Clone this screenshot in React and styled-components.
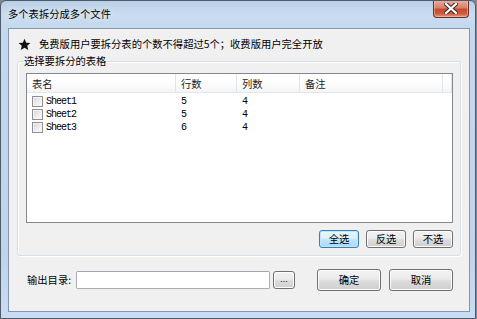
import React from "react";
import styled, { createGlobalStyle } from "styled-components";

const columns = [
  { title: "表名", width: 149 },
  { title: "行数", width: 61 },
  { title: "列数", width: 63 },
  { title: "备注", width: 143 },
];

const sheets = [
  { name: "Sheet1", rows: 5, cols: 4 },
  { name: "Sheet2", rows: 5, cols: 4 },
  { name: "Sheet3", rows: 6, cols: 4 },
];

const GlobalStyle = createGlobalStyle`
  html, body {
    margin: 0;
    padding: 0;
    background: #7d8a97;
  }
  body {
    font-family: "Noto Sans CJK SC", "Liberation Sans", sans-serif;
    font-size: 10.3px;
    color: #000;
  }
`;

export default function App() {
  return (
    <>
      <GlobalStyle />
      <Window>
        <TitleBar>
          <Title>多个表拆分成多个文件</Title>
          <CloseButton aria-label="关闭">
            <svg width="14" height="11" viewBox="0 0 14 11">
              <path
                d="M2 1 L12 10 M12 1 L2 10"
                stroke="#3a2a28"
                strokeWidth="4.2"
                strokeLinecap="square"
              />
              <path
                d="M2 1 L12 10 M12 1 L2 10"
                stroke="#ffffff"
                strokeWidth="2.2"
                strokeLinecap="square"
              />
            </svg>
          </CloseButton>
        </TitleBar>

        <Client>
          <Notice>
            <svg width="13" height="13" viewBox="0 0 24 24">
              <path
                d="M12 1.2 L15.1 8.6 L23 9.2 L17 14.4 L18.9 22.3 L12 18 L5.1 22.3 L7 14.4 L1 9.2 L8.9 8.6 Z"
                fill="#111"
              />
            </svg>
            <span>免费版用户要拆分表的个数不得超过5个；收费版用户完全开放</span>
          </Notice>

          <Group>
            <Legend>选择要拆分的表格</Legend>
            <ListView>
              <Header>
                {columns.map((c) => (
                  <HeaderCell key={c.title} $width={c.width}>
                    {c.title}
                  </HeaderCell>
                ))}
                <HeaderCell $width={10} $filler />
              </Header>
              <Rows>
                {sheets.map((s) => (
                  <Row key={s.name}>
                    <Cell $width={columns[0].width}>
                      <CheckBox />
                      <Mono>{s.name}</Mono>
                    </Cell>
                    <Cell $width={columns[1].width}>
                      <Mono>{s.rows}</Mono>
                    </Cell>
                    <Cell $width={columns[2].width}>
                      <Mono>{s.cols}</Mono>
                    </Cell>
                  </Row>
                ))}
              </Rows>
            </ListView>
            <ButtonRow>
              <Button $default>全选</Button>
              <Button>反选</Button>
              <Button>不选</Button>
            </ButtonRow>
          </Group>

          <OutputRow>
            <Label>输出目录:</Label>
            <PathInput type="text" />
            <BrowseButton>...</BrowseButton>
            <ActionButton $gap={22}>确定</ActionButton>
            <ActionButton $gap={8}>取消</ActionButton>
          </OutputRow>
        </Client>
      </Window>
    </>
  );
}

const Window = styled.div`
  width: 476px;
  height: 319px;
  box-sizing: border-box;
  border: 1px solid #4f5b68;
  border-radius: 6px 6px 0 0;
  background: linear-gradient(
    180deg,
    #b9cfe7 0,
    #cadcf0 14px,
    #c4d8ee 28px,
    #bfd4ec 80%,
    #c9dcf1 100%
  );
  display: flex;
  flex-direction: column;
  padding: 0 5px 6px 7px;
  overflow: hidden;
`;

const TitleBar = styled.div`
  height: 27px;
  display: flex;
  align-items: flex-start;
  justify-content: space-between;
  flex-shrink: 0;
`;

const Title = styled.div`
  padding-top: 6px;
  line-height: 14px;
  font-size: 10.3px;
  color: #000;
  text-shadow: 0 0 6px rgba(255, 255, 255, 0.9);
`;

const CloseButton = styled.div`
  width: 36px;
  height: 18px;
  margin-top: -1px;
  margin-right: 1px;
  box-sizing: border-box;
  border: 1px solid #6a3128;
  border-top: none;
  border-radius: 0 0 4px 4px;
  background: linear-gradient(
    180deg,
    #eab2a4 0,
    #dc806a 45%,
    #c84a30 55%,
    #cf5b3e 80%,
    #e4957a 100%
  );
  box-shadow: inset 0 0 0 1px rgba(255, 210, 200, 0.45);
  display: flex;
  align-items: center;
  justify-content: center;
`;

const Client = styled.div`
  flex: 1;
  box-sizing: border-box;
  border: 1px solid #8196b1;
  background: #f0f0f0;
  display: flex;
  flex-direction: column;
`;

const Notice = styled.div`
  display: flex;
  align-items: center;
  gap: 8px;
  height: 14px;
  margin: 8px 0 0 9px;
  line-height: 14px;
`;

const Group = styled.fieldset`
  margin: 3px 8px 0 8px;
  padding: 5px 7px 7px 8px;
  border: 1px solid #d5dfe5;
  border-radius: 3px;
  box-shadow: inset 1px 1px 0 #ffffff, 1px 1px 0 #ffffff;
  min-width: 0;
`;

const Legend = styled.legend`
  padding: 0 1px;
  margin-left: -3px;
  line-height: 14px;
  font-size: 10.3px;
`;

const ListView = styled.div`
  height: 150px;
  box-sizing: border-box;
  border: 1px solid #828790;
  background: #ffffff;
  overflow: hidden;
`;

const Header = styled.div`
  display: flex;
  height: 19px;
  box-sizing: border-box;
  border-bottom: 1px solid #e3e6ea;
  background: linear-gradient(180deg, #ffffff 0, #ffffff 45%, #f3f4f6 100%);
`;

const HeaderCell = styled.div`
  width: ${(p) => p.$width}px;
  flex: ${(p) => (p.$filler ? "1" : "none")};
  box-sizing: border-box;
  border-right: 1px solid #e1e5ea;
  padding-left: 5px;
  line-height: 19px;
  color: #1e1e1e;
`;

const Rows = styled.div`
  padding-top: 2px;
`;

const Row = styled.div`
  display: flex;
  height: 13px;
`;

const Cell = styled.div`
  width: ${(p) => p.$width}px;
  box-sizing: border-box;
  padding-left: 5px;
  display: flex;
  align-items: center;
  gap: 3px;
`;

const CheckBox = styled.span`
  width: 11px;
  height: 11px;
  box-sizing: border-box;
  border: 1px solid #8f8f8f;
  background: linear-gradient(135deg, #d6d6d6 0, #efefef 60%, #fbfbfb 100%);
  box-shadow: inset 0 0 0 1px #f4f4f4;
  flex-shrink: 0;
`;

const Mono = styled.span`
  font-family: "Liberation Mono", "DejaVu Sans Mono", monospace;
  font-size: 10px;
  letter-spacing: -1px;
  line-height: 13px;
  color: #000;
`;

const ButtonRow = styled.div`
  display: flex;
  justify-content: flex-end;
  gap: 7px;
  margin-top: 7px;
`;

const Button = styled.div`
  width: 40px;
  height: 18px;
  box-sizing: border-box;
  border: 1px solid ${(p) => (p.$default ? "#3c7fb1" : "#707070")};
  border-radius: 3px;
  background: ${(p) =>
    p.$default
      ? "linear-gradient(180deg, #eaf6fd 0, #d9f0fc 45%, #bee6fd 55%, #a7d9f5 100%)"
      : "linear-gradient(180deg, #f2f2f2 0, #ebebeb 45%, #dddddd 55%, #cfcfcf 100%)"};
  box-shadow: inset 0 0 0 1px ${(p) => (p.$default ? "#c4e5f6" : "#fcfcfc")};
  display: flex;
  align-items: center;
  justify-content: center;
  line-height: 14px;
`;

const OutputRow = styled.div`
  display: flex;
  align-items: center;
  margin: 13px 0 0 18px;
  height: 22px;
`;

const Label = styled.span`
  width: 49px;
  line-height: 14px;
`;

const PathInput = styled.input`
  width: 194px;
  height: 18px;
  box-sizing: border-box;
  margin: 0;
  border: 1px solid #abadb3;
  border-top-color: #a3a6ad;
  border-radius: 2px;
  background: #ffffff;
  outline: none;
`;

const BrowseButton = styled(Button)`
  width: 22px;
  margin-left: 3px;
  font-family: "Liberation Sans", sans-serif;
  font-size: 9px;
  line-height: 10px;
  padding-bottom: 2px;
`;

const ActionButton = styled(Button)`
  width: 64px;
  height: 22px;
  margin-left: ${(p) => p.$gap}px;
`;
